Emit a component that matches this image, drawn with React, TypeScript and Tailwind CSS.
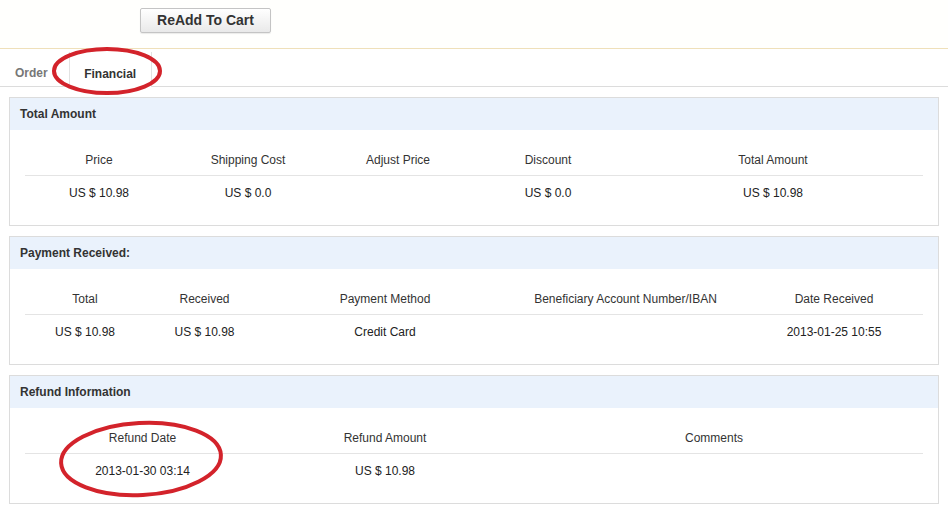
import React from 'react'

type Panel = {
  title: string
  cols: string
  heads: string[]
  values: string[]
}

const panels: Panel[] = [
  {
    title: 'Total Amount',
    cols: 'grid-cols-[148px_150px_150px_150px_1fr]',
    heads: ['Price', 'Shipping Cost', 'Adjust Price', 'Discount', 'Total Amount'],
    values: ['US $ 10.98', 'US $ 0.0', '', 'US $ 0.0', 'US $ 10.98'],
  },
  {
    title: 'Payment Received:',
    cols: 'grid-cols-[120px_119px_242px_239px_1fr]',
    heads: ['Total', 'Received', 'Payment Method', 'Beneficiary Account Number/IBAN', 'Date Received'],
    values: ['US $ 10.98', 'US $ 10.98', 'Credit Card', '', '2013-01-25 10:55'],
  },
  {
    title: 'Refund Information',
    cols: 'grid-cols-[235px_250px_408px_1fr]',
    heads: ['Refund Date', 'Refund Amount', 'Comments', ''],
    values: ['2013-01-30 03:14', 'US $ 10.98', '', ''],
  },
]

function InfoPanel({ panel }: { panel: Panel }) {
  return (
    <div className="mx-[9px] h-[129px] border border-[#dcdcdc] bg-white">
      {/* Header bar */}
      <div className="h-[32px] bg-[#eaf2fc] pl-[10px] flex items-center text-[12px] font-bold text-[#333]">
        {panel.title}
      </div>

      <div className="px-[15px] pt-[23px]">
        <div className={`grid ${panel.cols} border-b border-[#e4e4e4] pb-[8px]`}>
          {panel.heads.map((h, i) => (
            <div key={i} className="text-center text-[12px] leading-[14px] text-[#333]">
              {h}
            </div>
          ))}
        </div>
        <div className={`grid ${panel.cols} pt-[10px]`}>
          {panel.values.map((v, i) => (
            <div key={i} className="text-center text-[12px] leading-[14px] h-[14px] text-[#222]">
              {v}
            </div>
          ))}
        </div>
      </div>
    </div>
  )
}

export default function App() {
  return (
    <div className="relative w-[948px] h-[508px] overflow-hidden bg-white font-['Liberation_Sans',Arial,sans-serif]">
      {/* Top bar with button */}
      <div className="h-[49px] bg-[#fffffd] border-b border-[#efe0b9] pt-[8px] pl-[140px]">
        <button className="w-[131px] h-[25px] rounded-[2px] border border-[#c4c4c4] bg-gradient-to-b from-white to-[#e9e9e9] text-[14px] font-bold text-[#333] shadow-[0_1px_1px_rgba(0,0,0,0.08)]">
          ReAdd To Cart
        </button>
      </div>

      {/* Tabs */}
      <div className="h-[38px] border-b border-[#dcdcdc] flex items-end pl-[15px]">
        <div className="h-[37px] flex items-center pt-[10px] text-[12px] font-bold text-[#777] pr-[21px]">
          Order
        </div>
        <div className="h-[35px] w-[83px] -mb-px bg-white border-x border-[#e2e2e2] flex items-center justify-center pt-[8px] text-[12px] font-bold text-[#333]">
          Financial
        </div>
      </div>

      {/* Panels */}
      <div className="flex flex-col gap-[10px] pt-[10px]">
        {panels.map((p) => (
          <InfoPanel key={p.title} panel={p} />
        ))}
      </div>

      {/* Red annotation marks */}
      <svg className="absolute inset-0 pointer-events-none" width="948" height="508">
        <ellipse cx="107" cy="71" rx="53" ry="22" fill="none" stroke="#d3232b" strokeWidth="4" />
        <ellipse
          cx="141"
          cy="459"
          rx="80"
          ry="36"
          fill="none"
          stroke="#d3232b"
          strokeWidth="4"
          transform="rotate(-3 141 459)"
        />
      </svg>
    </div>
  )
}
